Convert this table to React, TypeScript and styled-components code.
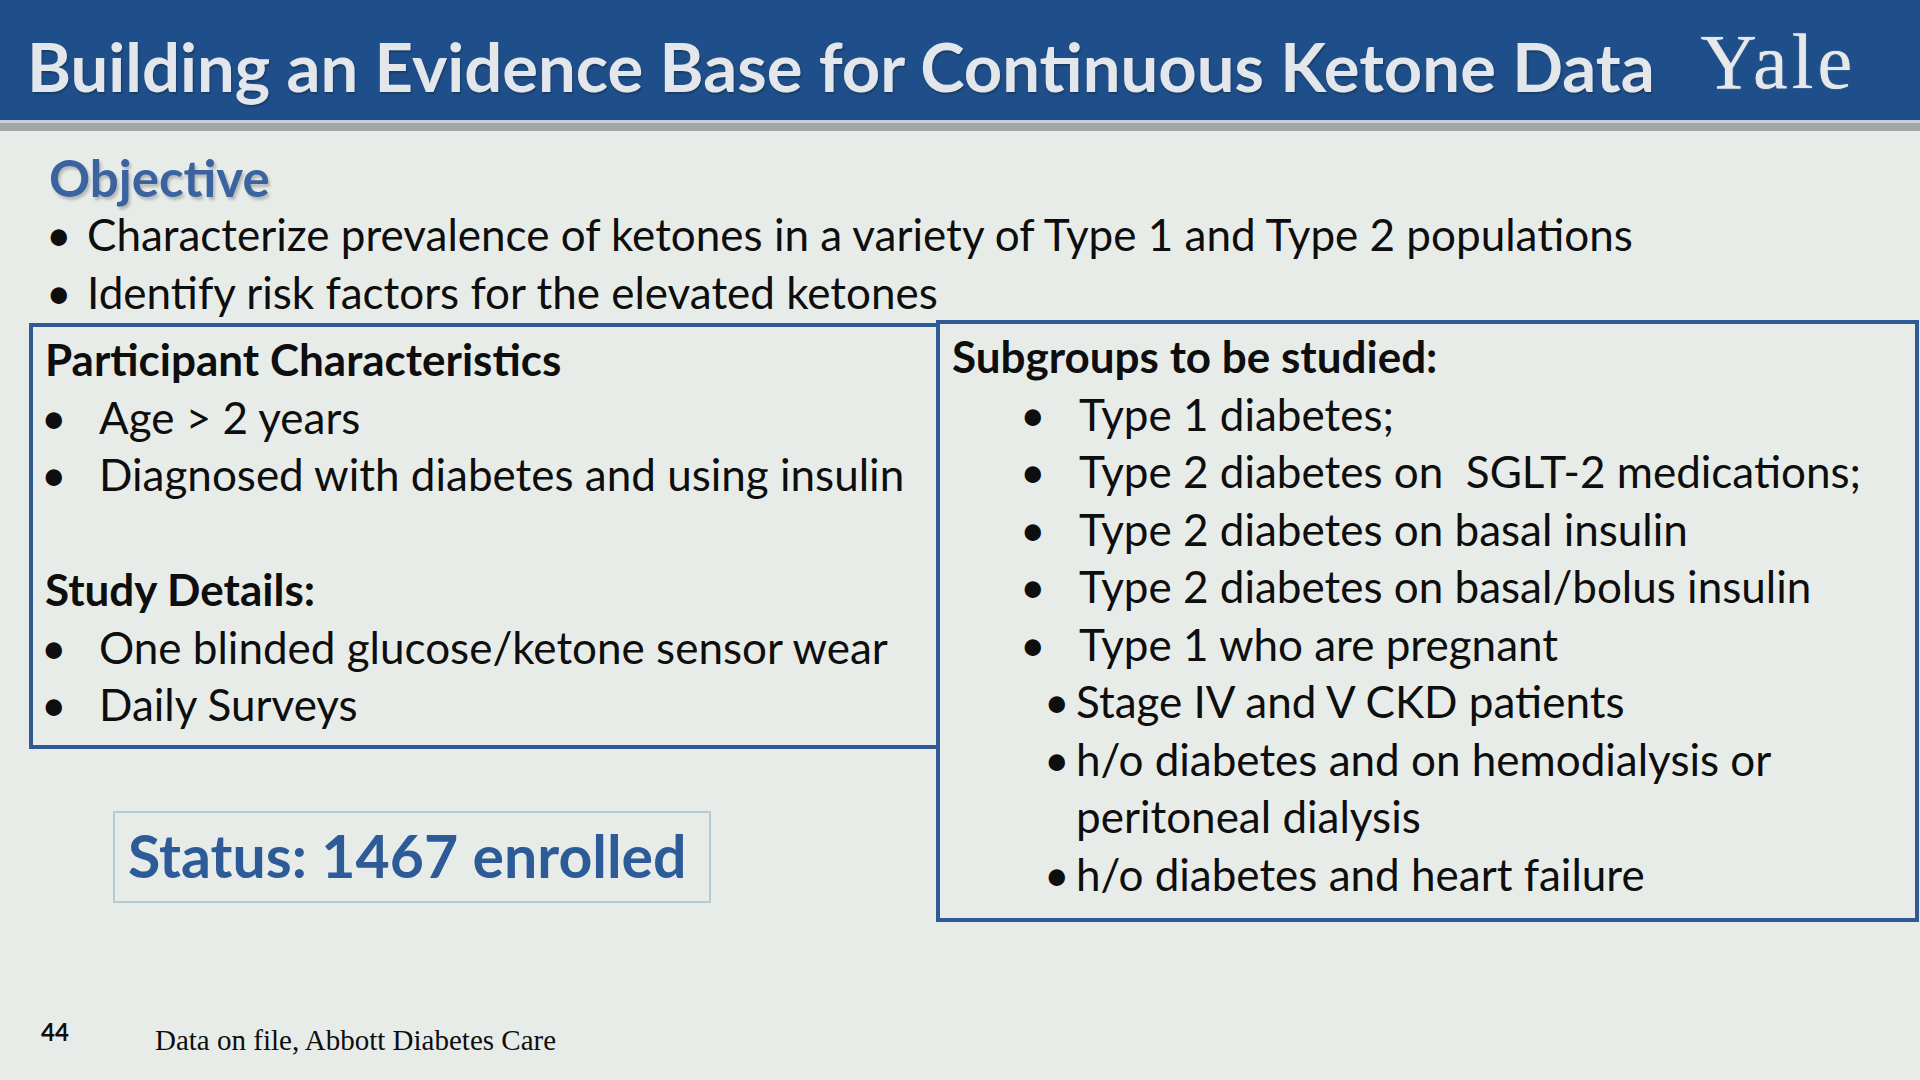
import React from "react";
import styled, { createGlobalStyle } from "styled-components";

const GlobalStyle = createGlobalStyle`
  html, body { margin: 0; padding: 0; background: #e8ece9; }
  * { box-sizing: border-box; }
`;

const Slide = styled.div`
  width: 1920px;
  height: 1080px;
  display: flex;
  flex-direction: column;
  background: #e8ece9;
  overflow: hidden;
  font-family: Lato, "Open Sans", sans-serif;
  color: #0e0e0e;
`;

const Header = styled.header`
  height: 120px;
  flex: none;
  background: #1f4f8a;
  display: flex;
  justify-content: space-between;
  align-items: flex-start;
  padding: 0 64px 0 27px;
`;

const Title = styled.h1`
  margin: 33px 0 0;
  font-family: Lato, sans-serif;
  font-weight: 700;
  font-size: 67px;
  line-height: 1;
  color: #e3e7eb;
  white-space: nowrap;
  text-shadow: 1px 2px 2px rgba(0, 0, 0, 0.25);
`;

const Logo = styled.div`
  margin-top: 23px;
  font-family: "Liberation Serif", "Times New Roman", serif;
  font-size: 78px;
  line-height: 1;
  letter-spacing: 4px;
  color: #e6e8ea;
  text-shadow: 0 0 1px #e6e8ea;
`;

const Stripe = styled.div`
  height: 11px;
  flex: none;
  border-top: 3px solid #c6d0da;
  background: #a3a6a6;
`;

const Body = styled.main`
  flex: 1;
  display: flex;
  flex-direction: column;
  padding: 21px 0 0 29px;
`;

const SectionTitle = styled.h2`
  margin: 0 0 0 20px;
  font-family: Lato, sans-serif;
  font-weight: 700;
  font-size: 51px;
  line-height: 1;
  color: #3a63a0;
  text-shadow: 2px 3px 3px rgba(0, 0, 0, 0.22);
`;

const List = styled.ul<{ $indent: number }>`
  list-style: none;
  margin: 0 0 0 ${(p) => p.$indent}px;
  padding: 0;
`;

const ObjectiveList = styled(List)`
  margin-top: 3px;
`;

const Item = styled.li<{ $col: number }>`
  display: flex;
  align-items: baseline;
  font-size: 44px;
  line-height: 57.5px;
  white-space: pre;

  &::before {
    content: "•";
    flex: none;
    width: ${(p) => p.$col}px;
  }
`;

const Cont = styled.div<{ $left: number }>`
  font-size: 44px;
  line-height: 57.5px;
  padding-left: ${(p) => p.$left}px;
`;

const Columns = styled.div`
  display: flex;
  align-items: flex-start;
  margin-top: -1px;
`;

const LeftColumn = styled.div`
  width: 911px;
  flex: none;
  display: flex;
  flex-direction: column;
  margin-top: 3px;
`;

const Box = styled.section<{ $height: number }>`
  height: ${(p) => p.$height}px;
  border: 4px solid #2f5a95;
  padding: 4px 0 0 12px;
`;

const RightBox = styled(Box)`
  width: 983px;
  flex: none;
  margin-left: -4px;
`;

const BoxHeading = styled.div`
  font-weight: 700;
  font-size: 44px;
  line-height: 57.5px;
`;

const Spacer = styled.div`
  height: 57.5px;
`;

const StatusBox = styled.div`
  margin: 62px 0 0 84px;
  width: 598px;
  height: 92px;
  border: 2px solid #b5cad2;
  padding: 13px 0 0 13px;
  font-weight: 700;
  font-size: 59px;
  line-height: 1;
  color: #2c5b98;
`;

const Footer = styled.footer`
  flex: none;
  height: 62px;
  display: flex;
  align-items: flex-start;
  padding-left: 41px;
`;

const PageNum = styled.div`
  font-family: Lato, sans-serif;
  font-weight: 700;
  font-size: 24px;
  line-height: 1;
  margin-top: 2px;
  width: 114px;
`;

const Source = styled.div`
  font-family: "Liberation Serif", "Times New Roman", serif;
  font-size: 29px;
  line-height: 1;
  margin-top: 8px;
`;

export default function App() {
  return (
    <Slide>
      <GlobalStyle />
      <Header>
        <Title>Building an Evidence Base for Continuous Ketone Data</Title>
        <Logo>Yale</Logo>
      </Header>
      <Stripe />
      <Body>
        <SectionTitle>Objective</SectionTitle>
        <ObjectiveList $indent={17}>
          <Item $col={41}>Characterize prevalence of ketones in a variety of Type 1 and Type 2 populations</Item>
          <Item $col={41}>Identify risk factors for the elevated ketones</Item>
        </ObjectiveList>
        <Columns>
          <LeftColumn>
            <Box $height={426}>
              <BoxHeading>Participant Characteristics</BoxHeading>
              <List $indent={-4}>
                <Item $col={58}>Age &gt; 2 years</Item>
                <Item $col={58}>Diagnosed with diabetes and using insulin</Item>
              </List>
              <Spacer />
              <BoxHeading>Study Details:</BoxHeading>
              <List $indent={-4}>
                <Item $col={58}>One blinded glucose/ketone sensor wear</Item>
                <Item $col={58}>Daily Surveys</Item>
              </List>
            </Box>
            <StatusBox>Status: 1467 enrolled</StatusBox>
          </LeftColumn>
          <RightBox $height={602}>
            <BoxHeading>Subgroups to be studied:</BoxHeading>
            <List $indent={68}>
              <Item $col={59}>Type 1 diabetes;</Item>
              <Item $col={59}>{"Type 2 diabetes on  SGLT-2 medications;"}</Item>
              <Item $col={59}>Type 2 diabetes on basal insulin</Item>
              <Item $col={59}>Type 2 diabetes on basal/bolus insulin</Item>
              <Item $col={59}>Type 1 who are pregnant</Item>
            </List>
            <List $indent={92}>
              <Item $col={32}>Stage IV and V CKD patients</Item>
              <Item $col={32}>h/o diabetes and on hemodialysis or</Item>
            </List>
            <Cont $left={124}>peritoneal dialysis</Cont>
            <List $indent={92}>
              <Item $col={32}>h/o diabetes and heart failure</Item>
            </List>
          </RightBox>
        </Columns>
      </Body>
      <Footer>
        <PageNum>44</PageNum>
        <Source>Data on file, Abbott Diabetes Care</Source>
      </Footer>
    </Slide>
  );
}
